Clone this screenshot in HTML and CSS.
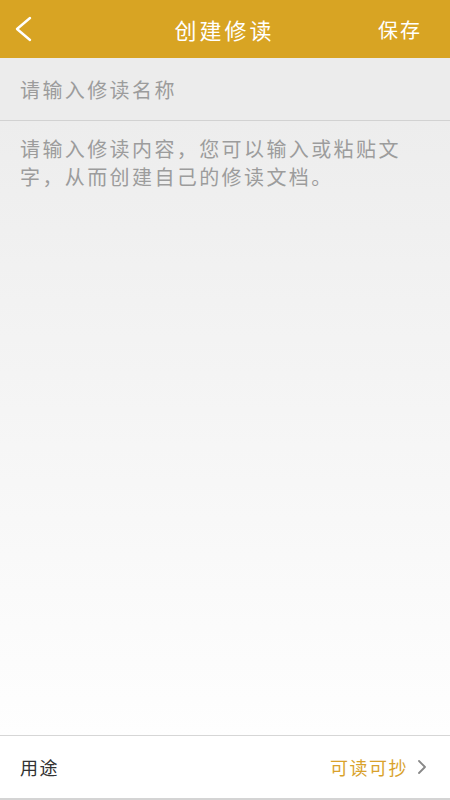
FILE: index.html
```html
<!DOCTYPE html>
<html lang="zh">
<head>
  <meta charset="UTF-8">
  <title>创建修读</title>
  <link rel="stylesheet" href="styles.css">
</head>
<body>

  <div class="page">
    <div class="topbar">
      <span class="back">
        <svg width="20" height="26" viewBox="0 0 20 26">
          <polyline points="17,2 4,13 17,24" fill="none" stroke="#fff" stroke-width="2.4" stroke-linecap="round" stroke-linejoin="round"/>
        </svg>
      </span>
      <span class="title">创建修读</span>
      <span class="save">保存</span>
    </div>

    <div class="name-row">请输入修读名称</div>

    <div class="content">
      <p class="hint">请输入修读内容，您可以输入或粘贴文字，从而创建自己的修读文档。</p>
    </div>

    <div class="usage-row">
      <span class="label">用途</span>
      <span class="value">可读可抄
        <svg width="12" height="16" viewBox="0 0 12 16">
          <polyline points="3,2 9,8 3,14" fill="none" stroke="#888" stroke-width="1.8" stroke-linecap="round" stroke-linejoin="round"/>
        </svg>
      </span>
    </div>
  </div>

</body>
</html>
```

FILE: styles.css
```css
body {
  margin: 0;
  font-family: "Noto Sans CJK SC", "Noto Sans", sans-serif;
  background: #fff;
}

.page {
  height: 800px;
  display: flex;
  flex-direction: column;
}

.topbar {
  height: 58px;
  background: #d8a423;
  color: #fff;
  display: flex;
  align-items: center;
  justify-content: space-between;
  padding: 0 28px 0 13px;
}

.back {
  display: flex;
  width: 60px;
}

.title {
  font-size: 22px;
  letter-spacing: 3px;
}

.save {
  font-size: 20px;
  letter-spacing: 2px;
  width: 46px;
  text-align: right;
}

.name-row {
  height: 62px;
  border-bottom: 1px solid #d2d2d2;
  background: #ececec;
  color: #9c9c9c;
  font-size: 20px;
  letter-spacing: 2.4px;
  display: flex;
  align-items: center;
  padding-left: 20px;
}

.content {
  flex: 1;
  background: linear-gradient(#ededed, #fefefe);
  border-bottom: 1px solid #d6d6d6;
  padding: 14px 36px 0 20px;
}

.hint {
  margin: 0;
  color: #9c9c9c;
  font-size: 20px;
  letter-spacing: 2.4px;
  line-height: 28px;
}

.usage-row {
  height: 62px;
  border-bottom: 2px solid #d4d4d4;
  display: flex;
  align-items: center;
  justify-content: space-between;
  padding: 0 22px 0 20px;
  font-size: 18px;
  letter-spacing: 1.5px;
}

.label {
  color: #333;
}

.value {
  color: #d9a22b;
  display: flex;
  align-items: center;
  gap: 8px;
}
```
